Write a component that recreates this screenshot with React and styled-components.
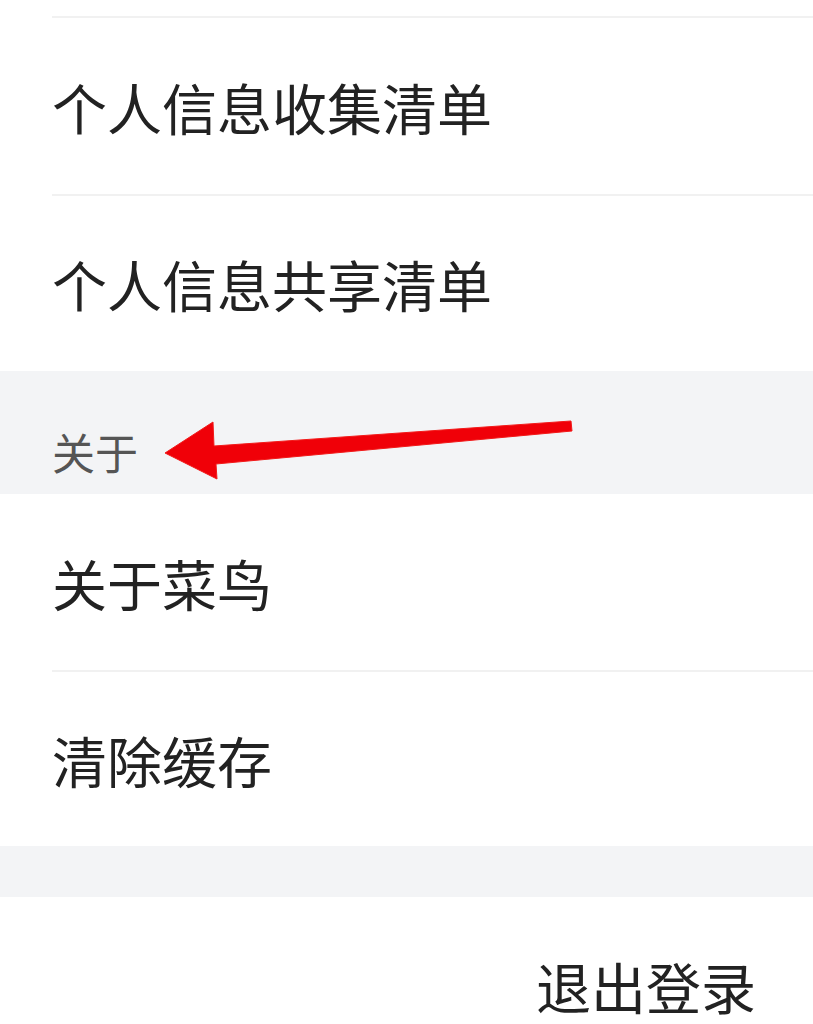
import React from "react";
import styled, { createGlobalStyle } from "styled-components";

const Global = createGlobalStyle`
  html, body {
    margin: 0;
    padding: 0;
    background: #ffffff;
  }
  body {
    font-family: "Noto Sans CJK SC", "Noto Sans", sans-serif;
    color: #222222;
    overflow: hidden;
  }
`;

const Page = styled.div`
  width: 813px;
  height: 1024px;
  display: flex;
  flex-direction: column;
  background: #ffffff;
  overflow: hidden;
  & > * {
    flex-shrink: 0;
  }
`;

const Group = styled.div`
  display: flex;
  flex-direction: column;
  background: #ffffff;
  & > * {
    flex-shrink: 0;
  }
`;

const TopEdge = styled.div`
  height: 16px;
  margin-left: 52px;
  border-bottom: 2px solid #f1f1f1;
`;

const Item = styled.div`
  height: ${(p) => p.$h}px;
  margin-left: 52px;
  display: flex;
  align-items: center;
  font-size: 55px;
  line-height: 1;
  color: #222222;
  border-bottom: ${(p) => (p.$divider ? "2px solid #f1f1f1" : "none")};
  box-sizing: border-box;
`;

const SectionHeader = styled.div`
  position: relative;
  height: 123px;
  box-sizing: border-box;
  background: #f3f4f6;
  display: flex;
  align-items: flex-end;
  padding: 0 0 21px 52px;
  font-size: 43px;
  line-height: 1;
  color: #555555;
`;

const Spacer = styled.div`
  height: 51px;
  background: #f3f4f6;
`;

const LogoutRow = styled.div`
  height: 127px;
  box-sizing: border-box;
  display: flex;
  align-items: flex-start;
  padding: 61px 0 0 536px;
  font-size: 55px;
  line-height: 1;
  color: #222222;
  background: #ffffff;
`;

const ArrowSvg = styled.svg`
  position: absolute;
  left: 0;
  top: 0;
  width: 813px;
  height: 123px;
  overflow: visible;
  pointer-events: none;
`;

function Arrow() {
  // coordinates relative to section header (top at y=371)
  const o = 371;
  const pts = [
    [165, 453],
    [213, 422],
    [214, 446],
    [571, 421],
    [572, 431],
    [216, 464],
    [217, 479],
  ]
    .map(([x, y]) => `${x},${y - o}`)
    .join(" ");
  return (
    <ArrowSvg viewBox="0 0 813 123">
      <polygon points={pts} fill="#f00008" stroke="#f21a1a" strokeWidth="1" strokeLinejoin="round" />
    </ArrowSvg>
  );
}

export default function App() {
  return (
    <>
      <Global />
      <Page>
        <Group>
          <TopEdge />
          <Item $h={178} $divider>个人信息收集清单</Item>
          <Item $h={175}>个人信息共享清单</Item>
        </Group>
        <SectionHeader>
          关于
          <Arrow />
        </SectionHeader>
        <Group>
          <Item $h={178} $divider>关于菜鸟</Item>
          <Item $h={174}>清除缓存</Item>
        </Group>
        <Spacer />
        <LogoutRow>退出登录</LogoutRow>
      </Page>
    </>
  );
}
